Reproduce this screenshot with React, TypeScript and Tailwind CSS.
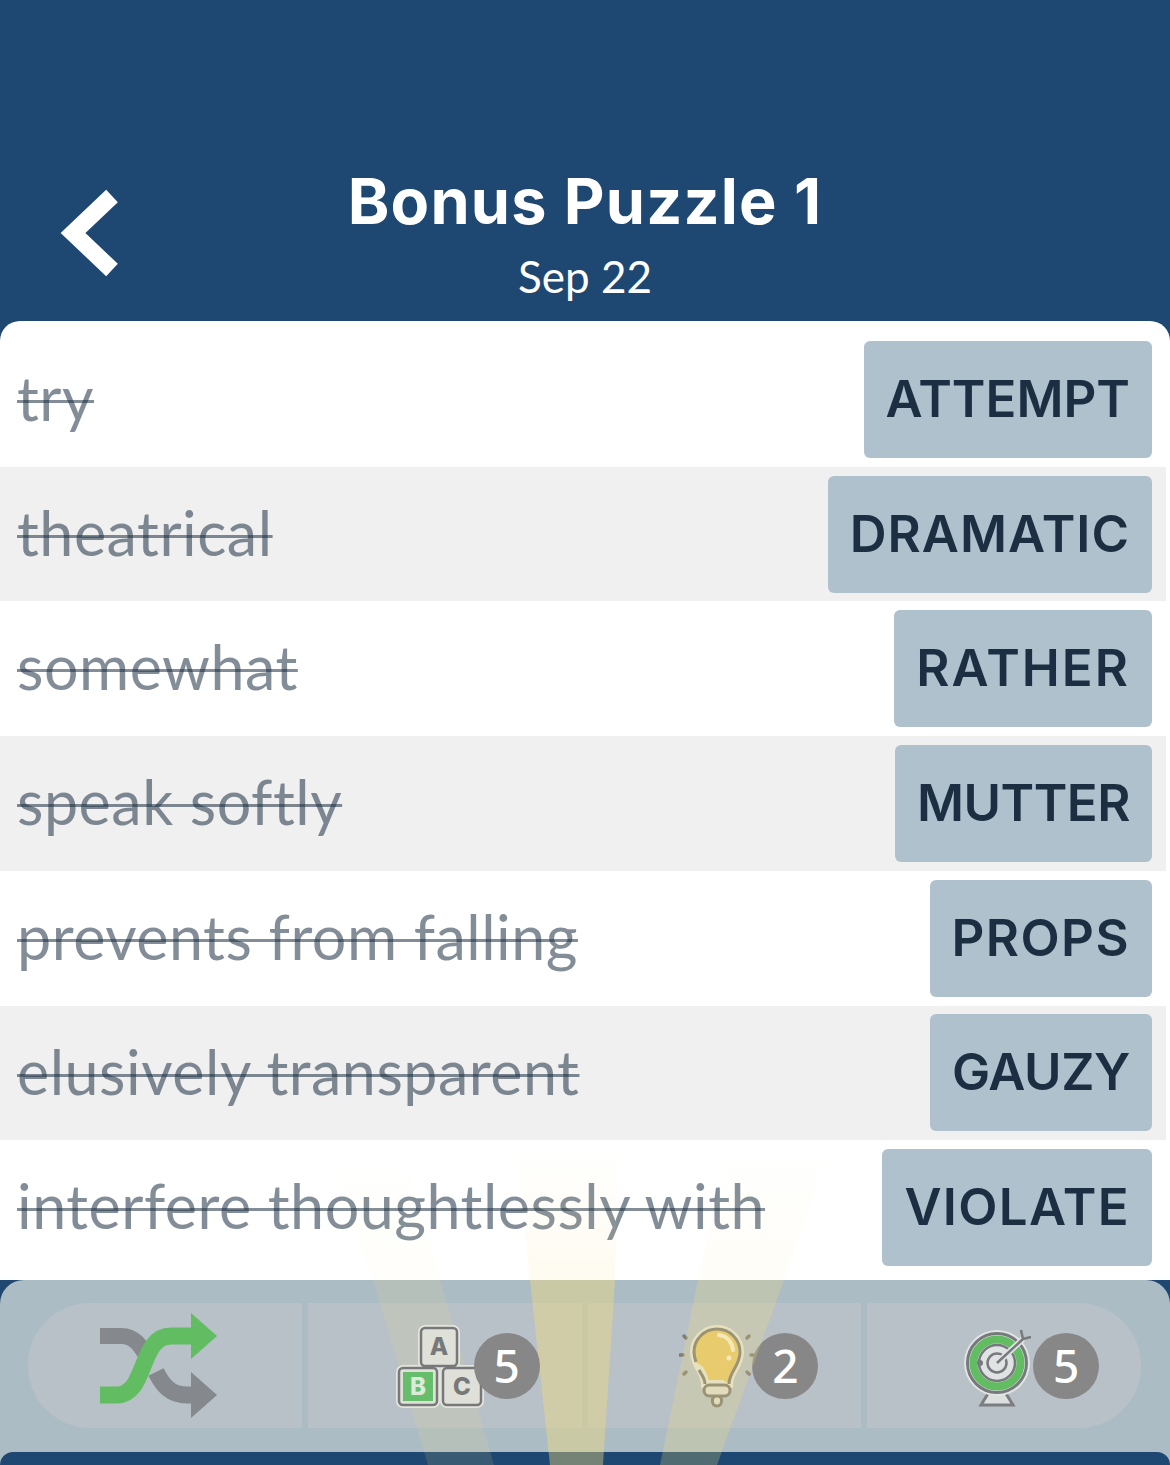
const rows = [
  { clue: 'try', answer: 'ATTEMPT', pad: 'pt-5 pb-[9px]', h: 'h-[146px]', track: 'tracking-normal' },
  { clue: 'theatrical', answer: 'DRAMATIC', pad: 'py-[9px]', h: 'h-[134px]', track: 'tracking-[1px]' },
  { clue: 'somewhat', answer: 'RATHER', pad: 'py-[9px]', h: 'h-[135px]', track: 'tracking-[2px]' },
  { clue: 'speak softly', answer: 'MUTTER', pad: 'py-[9px]', h: 'h-[135px]', track: 'tracking-[-0.5px]' },
  { clue: 'prevents from falling', answer: 'PROPS', pad: 'py-[9px]', h: 'h-[135px]', track: 'tracking-[1.4px]' },
  { clue: 'elusively transparent', answer: 'GAUZY', pad: 'py-[8px]', h: 'h-[134px]', track: 'tracking-[-0.4px]' },
  { clue: 'interfere thoughtlessly with', answer: 'VIOLATE', pad: 'py-[9px]', h: 'h-[135px]', track: 'tracking-[1.3px]' },
];

function ShuffleIcon() {
  return (
    <svg width="120" height="108" viewBox="0 0 120 108" fill="none">
      <path d="M1 24 H22 C36 24 42 34 50 48" stroke="#85888c" strokeWidth="16" />
      <path d="M57 60 C64 74 72 83 88 83 H94" stroke="#85888c" strokeWidth="17" />
      <path d="M92 60 L118 83 L92 106 Z" fill="#85888c" />
      <path d="M1 83 H18 C48 83 40 24 72 24 H94" stroke="#62bd62" strokeWidth="17" />
      <path d="M92 1 L118 24 L92 47 Z" fill="#62bd62" />
    </svg>
  );
}

function BlocksIcon() {
  return (
    <svg width="90" height="84" viewBox="0 0 90 84">
      <g stroke="#e4e5de" strokeWidth="6" fill="none">
        <rect x="25" y="4" width="36" height="38" rx="4" />
        <rect x="3" y="44" width="38" height="37" rx="4" />
        <rect x="47" y="44" width="38" height="37" rx="4" />
      </g>
      <rect x="25" y="4" width="36" height="38" rx="4" fill="#dfe0d8" stroke="#77787a" strokeWidth="2.5" />
      <rect x="3" y="44" width="38" height="37" rx="4" fill="#dfe0d8" stroke="#77787a" strokeWidth="2.5" />
      <rect x="7" y="48" width="30" height="29" fill="#66bd6c" />
      <rect x="47" y="44" width="38" height="37" rx="4" fill="#dfe0d8" stroke="#77787a" strokeWidth="2.5" />
      <text x="43" y="31" textAnchor="middle" fontFamily="Inter, sans-serif" fontWeight="800" fontSize="24" fill="#77787a">A</text>
      <text x="22" y="71" textAnchor="middle" fontFamily="Inter, sans-serif" fontWeight="800" fontSize="24" fill="#dcebd8">B</text>
      <text x="66" y="71" textAnchor="middle" fontFamily="Inter, sans-serif" fontWeight="800" fontSize="24" fill="#77787a">C</text>
    </svg>
  );
}

function BulbIcon() {
  return (
    <svg width="76" height="84" viewBox="0 0 76 84" fill="none">
      <path d="M26 60 C26 48 15 42 15 28 A23 23 0 0 1 61 28 C61 42 50 48 50 60 Z" fill="#e4c568" stroke="#e3e2d4" strokeWidth="8" />
      <path d="M26 60 C26 54 22 50 20 46 M17 38 C16 35 15 32 15 28 A23 23 0 0 1 61 28 C61 42 50 48 50 60" fill="#e4c568" stroke="#7e7c74" strokeWidth="3" />
      <path d="M37 72 C32 72 32 82 38 82 C44 82 44 72 39 72" fill="#dcdcd2" stroke="#7e7c74" strokeWidth="3" />
      <rect x="25" y="61" width="26" height="11" rx="5.5" fill="#dcdcd2" stroke="#7e7c74" strokeWidth="3" />
      <path d="M40 11 C48 12 53 18 54 26" stroke="#f3ecd0" strokeWidth="4" strokeLinecap="round" />
      <circle cx="50" cy="34" r="2.5" fill="#f3ecd0" />
      <g stroke="#7e7c74" strokeWidth="3.5" strokeLinecap="round">
        <path d="M5 12 L7 14" />
        <path d="M1 31 H4" />
        <path d="M5 50 L7 48" />
        <path d="M70 12 L68 14" />
        <path d="M72 31 H74" />
        <path d="M70 50 L68 48" />
      </g>
    </svg>
  );
}

function TargetIcon() {
  return (
    <svg width="70" height="84" viewBox="0 0 70 84" fill="none">
      <path d="M28 68 L20 81 H52 L44 68" fill="#dde0df" stroke="#7b7d80" strokeWidth="3" />
      <circle cx="36" cy="39" r="33" fill="#e1e5e4" />
      <circle cx="36" cy="39" r="29.5" fill="#dfe3e3" stroke="#77797c" strokeWidth="3" />
      <circle cx="36" cy="39" r="23.5" stroke="#62bd62" strokeWidth="8" />
      <circle cx="36" cy="39" r="18" fill="#dfe3e3" stroke="#77797c" strokeWidth="2.5" />
      <circle cx="19" cy="39" r="3" fill="#77797c" />
      <circle cx="36" cy="39" r="9.5" stroke="#77797c" strokeWidth="2.5" />
      <path d="M36 39 L62 15" stroke="#dfe3e3" strokeWidth="6" />
      <path d="M36 39 L62 15" stroke="#77797c" strokeWidth="2.5" />
      <path d="M60 6 L62 15 L70 13" stroke="#77797c" strokeWidth="2.5" />
    </svg>
  );
}

function Badge({ n }: { n: number }) {
  return (
    <div className="w-[66px] h-[66px] rounded-full bg-[#878787] text-white flex items-center justify-center text-[46px] font-medium font-['Noto_Sans',sans-serif]">
      {n}
    </div>
  );
}

export default function App() {
  return (
    <div className="relative w-[1170px] h-[1465px] overflow-hidden bg-[#1e4872] font-['Lato',sans-serif]">
      {/* Header */}
      <div className="relative h-[321px] flex flex-col items-center pt-[165px] text-white">
        <svg className="absolute left-[60px] top-[189px]" width="58" height="88" viewBox="0 0 58 88">
          <path d="M52 7 L13 44 L52 81" fill="none" stroke="#fff" strokeWidth="17" />
        </svg>
        <h1 className="text-[63px] leading-[72px] font-bold font-['Inter',sans-serif] tracking-[1.2px]">Bonus Puzzle 1</h1>
        <p className="mt-[14px] text-[44px] leading-[50px]">Sep 22</p>
      </div>

      {/* Answers */}
      <div className="h-[959px] rounded-t-[20px] bg-white overflow-hidden">
        {rows.map((r, i) => (
          <div key={r.clue} className={`${r.h} ${r.pad} pl-[17px] flex items-stretch justify-between ${i % 2 === 1 ? 'bg-[#f0f0f0] mr-1 pr-[14px]' : 'pr-[18px]'}`}>
            <span className="self-center -mt-[4px] text-[#1c2f42]/55 text-[61px] leading-none tracking-[0.5px] line-through decoration-[3px]">{r.clue}</span>
            <div className={`h-[117px] rounded-md bg-[#b0c1ce] px-[22px] flex items-center font-['Inter',sans-serif] font-semibold text-[51px] text-[#1c2f42] ${r.track}`}>
              {r.answer}
            </div>
          </div>
        ))}
      </div>

      {/* Bottom tray */}
      <div className="absolute left-0 right-0 top-[1280px] h-[185px] rounded-t-[24px] bg-[#acbcc4] pt-[23px] px-[28px]">
        <div className="grid grid-cols-4 gap-[6px] h-[125px] w-[1113px]">
          <div className="rounded-l-[62px] bg-[#b8c1c7] flex items-center justify-center pr-[12px]">
            <ShuffleIcon />
          </div>
          <div className="bg-[#b8c1c7] flex items-center justify-center pl-[46px]">
            <div className="-mr-[12px] z-10"><BlocksIcon /></div>
            <div className="z-20"><Badge n={5} /></div>
          </div>
          <div className="bg-[#b8c1c7] flex items-center justify-center pl-[49px]">
            <div className="-mr-[3px]"><BulbIcon /></div>
            <Badge n={2} />
          </div>
          <div className="rounded-r-[62px] bg-[#b8c1c7] flex items-center justify-center pl-[52px]">
            <div className="mr-[2px]"><TargetIcon /></div>
            <Badge n={5} />
          </div>
        </div>
      </div>
      <div className="absolute left-0 right-0 top-[1452px] h-[13px] rounded-t-[20px] bg-[#1e4872]" />

      {/* Light beams, fading out on the white panel and stronger on the tray */}
      <svg className="absolute left-0 top-0 pointer-events-none" width="1170" height="1465" viewBox="0 0 1170 1465">
        <defs>
          <linearGradient id="fade" gradientUnits="userSpaceOnUse" x1="0" y1="1140" x2="0" y2="1270">
            <stop offset="0" stopColor="#f6dc7a" stopOpacity="0" />
            <stop offset="1" stopColor="#f6dc7a" stopOpacity="1" />
          </linearGradient>
        </defs>
        <path d="M517 1145 H618 L615 1280 H530 Z" fill="url(#fade)" fillOpacity="0.1" />
        <path d="M530 1280 H615 L603 1465 H550 Z" fill="#f6dc7a" fillOpacity="0.4" />
        <path d="M335 1170 H410 L440 1280 H373 Z" fill="url(#fade)" fillOpacity="0.04" />
        <path d="M373 1280 H440 L494 1465 H428 Z" fill="#f6dc7a" fillOpacity="0.12" />
        <path d="M728 1150 H830 L784 1280 H698 Z" fill="url(#fade)" fillOpacity="0.06" />
        <path d="M698 1280 H784 L717 1465 H660 Z" fill="#f6dc7a" fillOpacity="0.24" />
      </svg>
    </div>
  );
}
